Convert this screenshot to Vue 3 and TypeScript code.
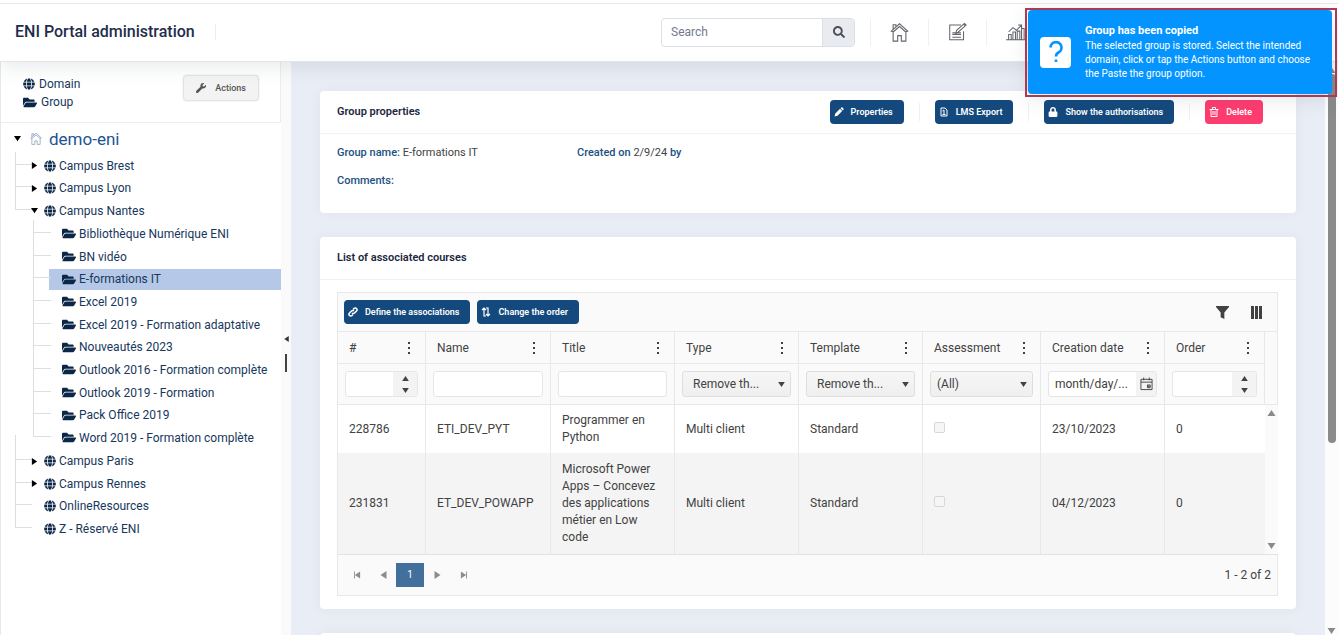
<script setup lang="ts">
import { h, ref } from 'vue'

interface Glyph {
  box: string
  fill?: string
  stroke?: string
  width?: number
}

const glyphs: Record<string, Glyph> = {
  globe: {
    box: '0 0 496 512',
    fill: 'M336.5 160C322 70.7 287.8 8 248 8s-74 62.7-88.5 152h177zM152 256c0 22.2 1.2 43.5 3.3 64h185.3c2.1-20.5 3.3-41.8 3.3-64s-1.2-43.5-3.3-64H155.3c-2.1 20.5-3.3 41.8-3.3 64zm324.7-96c-28.6-67.9-86.5-120.4-158-141.6 24.4 33.8 41.2 84.7 50 141.6h108zM177.2 18.4C105.8 39.6 47.8 92.1 19.3 160h108c8.7-56.9 25.5-107.8 49.9-141.6zM487.4 192H372.7c2.1 21 3.3 42.5 3.3 64s-1.2 43-3.3 64h114.6c5.5-20.5 8.6-41.8 8.6-64s-3.1-43.5-8.5-64zM120 256c0-21.5 1.2-43 3.3-64H8.6C3.2 212.5 0 233.8 0 256s3.2 43.5 8.6 64h114.6c-2-21-3.2-42.5-3.2-64zm39.5 96c14.5 89.3 48.7 152 88.5 152s74-62.7 88.5-152h-177zm159.3 141.6c71.4-21.2 129.4-73.7 158-141.6h-108c-8.8 56.9-25.6 107.8-50 141.6zM19.3 352c28.6 67.9 86.5 120.4 158 141.6-24.4-33.8-41.2-84.7-50-141.6h-108z',
  },
  folder: {
    box: '0 0 576 512',
    fill: 'M572.694 292.093L500.27 416.248A63.997 63.997 0 0 1 444.989 448H45.025c-18.523 0-30.064-20.093-20.731-36.093l72.424-124.155A64 64 0 0 1 152 256h399.964c18.523 0 30.064 20.093 20.73 36.093zM152 224h328v-48c0-26.51-21.49-48-48-48H272l-64-64H48C21.49 64 0 85.49 0 112v278.046l69.077-118.418C86.214 242.25 117.989 224 152 224z',
  },
  search: {
    box: '0 0 512 512',
    fill: 'M505 442.7L405.3 343c-4.5-4.5-10.6-7-17-7H372c27.6-35.3 44-79.7 44-128C416 93.1 322.9 0 208 0S0 93.1 0 208s93.1 208 208 208c48.3 0 92.7-16.4 128-44v16.3c0 6.4 2.5 12.5 7 17l99.7 99.7c9.4 9.4 24.6 9.4 33.9 0l28.3-28.3c9.4-9.4 9.4-24.6.1-34zM208 336c-70.7 0-128-57.2-128-128 0-70.7 57.2-128 128-128 70.7 0 128 57.2 128 128 0 70.7-57.2 128-128 128z',
  },
  lock: {
    box: '0 0 448 512',
    fill: 'M400 224h-24v-72C376 68.2 307.8 0 224 0S72 68.2 72 152v72H48c-26.5 0-48 21.5-48 48v192c0 26.5 21.5 48 48 48h352c26.5 0 48-21.5 48-48V272c0-26.5-21.5-48-48-48zm-104 0H152v-72c0-39.7 32.3-72 72-72s72 32.3 72 72v72z',
  },
  wrench: {
    box: '0 0 512 512',
    fill: 'M507.73 109.1c-2.24-9.03-13.54-12.09-20.12-5.51l-74.36 74.36-67.88-11.31-11.31-67.88 74.36-74.36c6.62-6.62 3.43-17.9-5.66-20.16-47.38-11.74-99.55.91-136.58 37.93-39.64 39.64-50.55 97.1-34.05 147.2L18.74 402.76c-24.99 24.99-24.99 65.51 0 90.5 24.99 24.99 65.51 24.99 90.5 0l213.21-213.21c50.12 16.71 107.47 5.68 147.37-34.22 37.07-37.07 49.7-89.32 37.91-136.73z',
  },
  pencil: { box: '0 0 20 20', fill: 'M1 19l1.6-6L12 3.600l4.400 4.400L7 17.400zM13.200 2.400l1.200-1.200a1.800 1.800 0 0 1 2.500 0l1.900 1.900a1.800 1.800 0 0 1 0 2.500l-1.200 1.200z' },
  export: { box: '0 0 20 20', stroke: 'M4 2h8l4 4v12H4zM10 6v8M7 8l3-2M7 15h6', width: 2 },
  trash: { box: '0 0 20 20', stroke: 'M1 5h18M7 4V1h6v3M4 5v14h12V5M8 8v8M12 8v8', width: 2 },
  link: { box: '0 0 20 20', stroke: 'M8 12a3.500 3.500 0 0 0 5 0l4-4a3.500 3.500 0 0 0-5-5l-2 2M12 8a3.500 3.500 0 0 0-5 0l-4 4a3.500 3.500 0 0 0 5 5l2-2', width: 3 },
  order: { box: '0 0 20 20', stroke: 'M6 19V3M2 6l4-4 4 4M6 18h4M14 1v16M10 14l4 4 4-4M14 2h-4', width: 2.4 },
  home: { box: '0 0 20 22', stroke: 'M1 10L10 2l9 8-2 1-7-6-7 6zM3 11v10h5v-6h4v6h5V11M3 8V3h3v3', width: 1.2 },
  note: { box: '0 0 22 22', stroke: 'M15 3H2v17h16V10M9 13l1-4 9-8 2 2-9 8zM18 2l2 2M5 12h10M5 14h10M5 17h10', width: 1.2 },
  chart: { box: '0 0 22 22', stroke: 'M0 20h22M3 20v-6h3v6M8 20v-9h3v9M13 20V10h3v10M18 20V7h3v13M3 11l5-5 4 3 6-6M14 3h4v4', width: 1.2 },
  filter: { box: '0 0 14 14', fill: 'M0 0h14v1L9 7v7l-4-2V7L0 1z' },
  columns: { box: '0 0 13 13', fill: 'M1 0h3v13H1zM5 0h3v13H5zM9 0h3v13H9z' },
  dots: { box: '0 0 4 14', fill: 'M1 1h2v2H1zM1 6h2v2H1zM1 11h2v2H1z' },
  calendar: { box: '0 0 14 14', stroke: 'M1 2h12v11H1zM1 5h12M4 0v3M10 0v3M8 8h3v3H8zM9 9h1v1H9z', width: 1 },
  up: { box: '0 0 8 6', fill: 'M4 0l4 6H0z' },
  down: { box: '0 0 8 6', fill: 'M0 0h8L4 6z' },
  right: { box: '0 0 6 8', fill: 'M0 0l6 4-6 4z' },
  left: { box: '0 0 6 8', fill: 'M6 0v8L0 4z' },
  first: { box: '0 0 8 8', fill: 'M0 0h1v8H0zM7 0v8L1 4z' },
  last: { box: '0 0 8 8', fill: 'M7 0h1v8H7zM1 0l6 4-6 4z' },
  question: { box: '0 0 16 22', stroke: 'M2.500 6.500a5.500 5.500 0 1 1 8 5C8.500 12.500 8 13.500 8 15.500M8 18.500v2.500', width: 2.6 },
}

const Icon = (props: { name: string }) => {
  const g = glyphs[props.name]
  return h('svg', { viewBox: g.box, 'aria-hidden': 'true' }, [
    g.fill
      ? h('path', { d: g.fill, fill: 'currentColor' })
      : h('path', { d: g.stroke, fill: 'none', stroke: 'currentColor', 'stroke-width': g.width }),
  ])
}
Icon.props = ['name']

interface TreeNode {
  label: string
  state?: 'open' | 'closed'
  groups?: string[]
}

const campuses: TreeNode[] = [
  { label: 'Campus Brest', state: 'closed' },
  { label: 'Campus Lyon', state: 'closed' },
  {
    label: 'Campus Nantes',
    state: 'open',
    groups: [
      'Bibliothèque Numérique ENI',
      'BN vidéo',
      'E-formations IT',
      'Excel 2019',
      'Excel 2019 - Formation adaptative',
      'Nouveautés 2023',
      'Outlook 2016 - Formation complète',
      'Outlook 2019 - Formation',
      'Pack Office 2019',
      'Word 2019 - Formation complète',
    ],
  },
  { label: 'Campus Paris', state: 'closed' },
  { label: 'Campus Rennes', state: 'closed' },
  { label: 'OnlineResources' },
  { label: 'Z - Réservé ENI' },
]

const selected = ref('E-formations IT')

const navItems = [
  { icon: 'home', label: 'Home' },
  { icon: 'note', label: 'Registrations' },
  { icon: 'chart', label: 'Statistics' },
]

const groupActions = [
  { icon: 'pencil', label: 'Properties' },
  { icon: 'export', label: 'LMS Export' },
  { icon: 'lock', label: 'Show the authorisations' },
  { icon: 'trash', label: 'Delete', danger: true },
]

const columns = [
  { key: 'id', label: '#', filter: 'number' },
  { key: 'name', label: 'Name', filter: 'text' },
  { key: 'title', label: 'Title', filter: 'text' },
  { key: 'type', label: 'Type', filter: 'select', option: 'Remove th...' },
  { key: 'template', label: 'Template', filter: 'select', option: 'Remove th...' },
  { key: 'assessment', label: 'Assessment', filter: 'select', option: '(All)' },
  { key: 'date', label: 'Creation date', filter: 'date' },
  { key: 'order', label: 'Order', filter: 'number' },
]

const courses = [
  { id: 228786, name: 'ETI_DEV_PYT', title: 'Programmer en Python', type: 'Multi client', template: 'Standard', date: '23/10/2023', order: 0 },
  { id: 231831, name: 'ET_DEV_POWAPP', title: 'Microsoft Power Apps – Concevez des applications métier en Low code', type: 'Multi client', template: 'Standard', date: '04/12/2023', order: 0 },
]
</script>

<template>
  <div class="page">
    <header class="topbar">
      <h1 class="brand">ENI Portal administration</h1>
      <form class="search" role="search" @submit.prevent>
        <input type="text" placeholder="Search" aria-label="Search" />
        <button type="submit" aria-label="Run search"><Icon name="search" class="ic-search" /></button>
      </form>
      <nav class="nav">
        <a v-for="n in navItems" :key="n.icon" href="#" :aria-label="n.label"><Icon :name="n.icon" class="ic-nav" /></a>
      </nav>
    </header>

    <div class="body">
      <aside class="sidebar">
        <div class="legend">
          <ul>
            <li><Icon name="globe" class="ic-globe" />Domain</li>
            <li><Icon name="folder" class="ic-folder" />Group</li>
          </ul>
          <button type="button" class="actions"><Icon name="wrench" class="ic-btn" />Actions</button>
        </div>
        <div class="root">
          <button type="button" class="toggle" aria-label="Collapse demo-eni"><Icon name="down" class="ic-toggle" /></button>
          <Icon name="home" class="ic-home" />
          <a href="#">demo-eni</a>
        </div>
        <ul class="tree">
          <li v-for="node in campuses" :key="node.label">
            <div class="node">
              <button v-if="node.state" type="button" class="toggle" :aria-label="'Toggle ' + node.label">
                <Icon :name="node.state === 'open' ? 'down' : 'right'" class="ic-toggle" />
              </button>
              <span v-else class="toggle"></span>
              <a href="#"><Icon name="globe" class="ic-globe" />{{ node.label }}</a>
            </div>
            <ul v-if="node.groups" class="groups">
              <li v-for="g in node.groups" :key="g">
                <a href="#" :class="{ active: g === selected }" @click.prevent="selected = g"><Icon name="folder" class="ic-folder" />{{ g }}</a>
              </li>
            </ul>
          </li>
        </ul>
      </aside>

      <div class="splitter">
        <button type="button" aria-label="Collapse panel"><Icon name="left" class="ic-left" /></button>
        <span class="grip"></span>
      </div>

      <main class="content">
        <section class="card">
          <div class="card-head">
            <h2>Group properties</h2>
            <div class="head-actions">
              <div v-for="a in groupActions" :key="a.label" class="head-action">
                <button type="button" class="btn" :class="{ danger: a.danger }"><Icon :name="a.icon" class="ic-btn" />{{ a.label }}</button>
              </div>
            </div>
          </div>
          <div class="props">
            <p><b>Group name:</b> E-formations IT</p>
            <p><b>Created on</b> 2/9/24 <b>by</b></p>
            <p><b>Comments:</b></p>
          </div>
        </section>

        <section class="card">
          <div class="card-head"><h2>List of associated courses</h2></div>
          <div class="grid-wrap">
            <div class="grid">
              <div class="toolbar">
                <button type="button" class="btn"><Icon name="link" class="ic-btn" />Define the associations</button>
                <button type="button" class="btn"><Icon name="order" class="ic-btn" />Change the order</button>
                <div class="tools">
                  <button type="button" class="plain" aria-label="Filter"><Icon name="filter" class="ic-tool" /></button>
                  <button type="button" class="plain" aria-label="Columns"><Icon name="columns" class="ic-tool" /></button>
                </div>
              </div>
              <table>
                <colgroup>
                  <col v-for="c in columns" :key="c.key" :class="'c-' + c.key" />
                  <col class="c-gutter" />
                </colgroup>
                <thead>
                  <tr class="titles">
                    <th v-for="c in columns" :key="c.key" scope="col">
                      <div class="th">
                        <span>{{ c.label }}</span>
                        <button type="button" class="plain" :aria-label="c.label + ' column menu'"><Icon name="dots" class="ic-dots" /></button>
                      </div>
                    </th>
                    <td rowspan="2"></td>
                  </tr>
                  <tr class="filters">
                    <td v-for="c in columns" :key="c.key">
                      <div v-if="c.filter === 'number'" class="field number">
                        <input type="text" inputmode="numeric" :aria-label="'Filter ' + c.label" />
                        <span class="spin">
                          <button type="button" aria-label="Increase"><Icon name="up" class="ic-arrow" /></button>
                          <button type="button" aria-label="Decrease"><Icon name="down" class="ic-arrow" /></button>
                        </span>
                      </div>
                      <div v-else-if="c.filter === 'text'" class="field">
                        <input type="text" :aria-label="'Filter ' + c.label" />
                      </div>
                      <div v-else-if="c.filter === 'select'" class="field drop">
                        <select :aria-label="'Filter ' + c.label"><option>{{ c.option }}</option></select>
                        <Icon name="down" class="ic-arrow" />
                      </div>
                      <div v-else class="field date">
                        <input type="text" placeholder="month/day/..." :aria-label="'Filter ' + c.label" />
                        <button type="button" aria-label="Open calendar"><Icon name="calendar" class="ic-cal" /></button>
                      </div>
                    </td>
                  </tr>
                </thead>
                <tbody>
                  <tr v-for="(r, i) in courses" :key="r.id">
                    <td>{{ r.id }}</td>
                    <td>{{ r.name }}</td>
                    <td>{{ r.title }}</td>
                    <td>{{ r.type }}</td>
                    <td>{{ r.template }}</td>
                    <td><input type="checkbox" disabled :aria-label="'Assessment ' + r.name" /></td>
                    <td>{{ r.date }}</td>
                    <td>{{ r.order }}</td>
                    <td v-if="i === 0" class="gutter" :rowspan="courses.length">
                      <div class="gutter-bar"><Icon name="up" class="ic-bar" /><Icon name="down" class="ic-bar" /></div>
                    </td>
                  </tr>
                </tbody>
              </table>
              <div class="pager">
                <button type="button" class="plain" aria-label="First page"><Icon name="first" class="ic-page" /></button>
                <button type="button" class="plain" aria-label="Previous page"><Icon name="left" class="ic-page" /></button>
                <button type="button" class="current">1</button>
                <button type="button" class="plain" aria-label="Next page"><Icon name="right" class="ic-page" /></button>
                <button type="button" class="plain" aria-label="Last page"><Icon name="last" class="ic-page" /></button>
                <span class="count">1 - 2 of 2</span>
              </div>
            </div>
          </div>
        </section>

        <section class="card next"></section>
      </main>

      <div class="scrollbar">
        <Icon name="up" class="ic-bar" />
        <span class="thumb"></span>
        <Icon name="down" class="ic-bar" />
      </div>
    </div>

    <div class="toast-frame">
      <div class="toast" role="status">
        <span class="toast-icon"><Icon name="question" class="ic-question" /></span>
        <div>
          <strong>Group has been copied</strong>
          <p>The selected group is stored. Select the intended domain, click or tap the Actions button and choose the Paste the group option.</p>
        </div>
      </div>
    </div>
  </div>
</template>

<style>
body {
  margin: 0;
  overflow: hidden;
}
</style>

<style scoped>
.page,
.page * {
  box-sizing: border-box;
}
.page {
  position: relative;
  display: flex;
  flex-direction: column;
  height: 100vh;
  overflow: hidden;
  font: 12px/18px Roboto, "Liberation Sans", sans-serif;
  color: #424242;
  background: #fff;
}
h1, h2, p, ul {
  margin: 0;
  padding: 0;
}
ul {
  list-style: none;
}
a {
  color: inherit;
  text-decoration: none;
}
button, input, select {
  font: inherit;
  color: inherit;
  margin: 0;
  padding: 0;
  border: 0;
  background: none;
  min-width: 0;
}
svg {
  display: block;
  flex: none;
}

.topbar {
  position: relative;
  z-index: 2;
  flex: none;
  display: flex;
  align-items: center;
  height: 62px;
  padding: 3px 294px 0 15px;
  background: linear-gradient(#fff 3px, #e9eaec 3px, #e9eaec 4px, #fff 4px);
  border-bottom: 1px solid #e2e5e9;
  box-shadow: 0 4px 20px rgba(60, 75, 95, 0.13);
}
.brand {
  font-size: 16px;
  font-weight: 500;
  line-height: 16px;
  color: #1f2d4d;
  padding-right: 20px;
  border-right: 1px solid #eceef3;
}
.search {
  display: flex;
  width: 194px;
  height: 29px;
  margin-left: auto;
  border: 1px solid #dcdfe6;
  border-radius: 4px;
  overflow: hidden;
}
.search input {
  flex: 1;
  padding: 0 9px;
}
.search input::placeholder {
  color: #74788d;
  opacity: 1;
}
.search button {
  display: grid;
  place-items: center;
  width: 32px;
  background: #e9ebf0;
  border-left: 1px solid #dcdfe6;
  color: #495057;
}
.nav {
  display: flex;
  margin-left: 15px;
}
.nav a {
  display: grid;
  place-items: center;
  width: 58px;
  height: 27px;
  border-left: 1px solid #eef0f5;
  color: #63666c;
}
.ic-search { width: 12px; height: 12px; }
.ic-nav { width: 19px; height: 20px; }

.body {
  flex: 1;
  min-height: 0;
  display: flex;
}
.sidebar {
  flex: none;
  width: 281px;
  border-left: 1px solid #e6e8ec;
  color: #17375c;
  overflow: hidden;
}
.legend {
  display: flex;
  justify-content: space-between;
  align-items: flex-start;
  height: 61px;
  padding: 13px 21px 0 22px;
  border: 1px solid #ebedf0;
  border-width: 0 1px 1px 0;
}
.legend li {
  display: flex;
  align-items: center;
  gap: 4px;
}
.actions {
  display: flex;
  align-items: center;
  gap: 9px;
  height: 26px;
  padding: 0 12px;
  border: 1px solid #e4e4e4;
  border-radius: 4px;
  background: #f3f3f3;
  box-shadow: 0 0 2px #dcdcdc;
  font-size: 9px;
  font-weight: 500;
  color: #555;
}
.ic-globe { width: 12px; height: 12px; color: #0b2747; }
.ic-folder { width: 14px; height: 13px; color: #0b2747; }
.toggle {
  display: grid;
  place-items: center;
  flex: none;
  width: 8px;
  height: 12px;
  color: #000;
}
.ic-toggle { width: 7px; height: 7px; }
.root {
  display: flex;
  align-items: center;
  height: 31px;
  padding-left: 12px;
  font-size: 17px;
  color: #205493;
}
.ic-home {
  width: 12px;
  height: 13px;
  margin: 0 7px 0 9px;
  color: #7c99b8;
}
.node {
  position: relative;
  display: flex;
  align-items: center;
  gap: 6px;
  height: 23px;
  padding-left: 29px;
}
li:nth-child(even) > .node {
  height: 22px;
}
.node a,
.groups a {
  display: flex;
  align-items: center;
  gap: 3px;
}
.node::before,
.groups li::before {
  content: "";
  position: absolute;
  left: 14px;
  bottom: 12px;
  width: 16px;
  height: 24px;
  border: 1px solid #dcdee1;
  border-width: 0 0 1px 1px;
}
.node .toggle {
  position: relative;
}
li:first-child > .node::before {
  height: 12px;
}
.groups {
  display: grid;
  grid-auto-rows: 23px 23px 22px;
  padding-bottom: 1px;
}
.groups li {
  position: relative;
  display: flex;
  align-items: center;
  padding-left: 48px;
}
.groups li::before {
  left: 32px;
  width: 17px;
}
.groups li:first-child::before {
  height: 12px;
}
.groups a {
  flex: 1;
  height: 21px;
  padding-left: 13px;
}
.groups a.active {
  background: #b5c8e7;
}

.splitter {
  flex: none;
  display: flex;
  flex-direction: column;
  align-items: center;
  justify-content: center;
  gap: 12px;
  width: 10px;
  padding-top: 11px;
  background: #fafafa;
  color: #333;
}
.ic-left { width: 5px; height: 6px; }
.grip {
  width: 2px;
  height: 18px;
  background: #424242;
}

.content {
  flex: 1;
  min-width: 0;
  display: flex;
  flex-direction: column;
  gap: 24px;
  padding: 29px 29px 0 29px;
  background: #e9edf5;
  overflow: hidden;
}
.card {
  flex: none;
  background: #fff;
  border-radius: 4px;
  box-shadow: 0 0 13px rgba(82, 63, 105, 0.05);
}
.card-head {
  display: flex;
  align-items: center;
  justify-content: space-between;
  height: 43px;
  padding: 0 33px 0 17px;
  border-bottom: 1px solid #f0f2f5;
}
h2 {
  font-size: 11px;
  line-height: 16px;
  font-weight: 600;
  color: #1c2840;
}
.head-actions {
  display: flex;
}
.head-action + .head-action {
  position: relative;
  margin-left: 31px;
}
.head-action + .head-action::before {
  content: "";
  position: absolute;
  left: -16px;
  top: 3px;
  height: 18px;
  border-left: 1px solid #eef0f4;
}
.btn {
  display: flex;
  align-items: center;
  gap: 7px;
  height: 24px;
  padding: 0 11px 0 4px;
  border-radius: 4px;
  background: #14497d;
  color: #fff;
  font-size: 9px;
  font-weight: 600;
  white-space: nowrap;
}
.btn.danger {
  background: #ff3c6f;
}
.ic-btn { width: 10px; height: 10px; }
.props {
  display: grid;
  grid-template-columns: 1fr 3fr;
  gap: 12px 6px;
  padding: 11px 17px 24px;
  font-size: 11px;
  line-height: 16px;
}
.props b {
  font-weight: 500;
  color: #205081;
}
.grid-wrap {
  padding: 12px 18px 13px 17px;
}
.grid {
  border: 1px solid #e8e8e8;
  background: #fafafa;
}
.toolbar {
  display: flex;
  align-items: center;
  gap: 7px;
  height: 38px;
  padding: 0 14px 0 6px;
}
.tools {
  display: flex;
  gap: 21px;
  margin-left: auto;
}
.plain {
  display: grid;
  place-items: center;
}
.ic-tool { width: 13px; height: 13px; }
table {
  width: 100%;
  table-layout: fixed;
  border-collapse: separate;
  border-spacing: 0;
}
.c-id { width: 88px; }
.c-name { width: 125px; }
.c-title, .c-type, .c-template, .c-date { width: 124px; }
.c-assessment { width: 118px; }
.c-order { width: 100px; }
.c-gutter { width: 13px; }
th, td {
  padding: 0;
  text-align: left;
  font-weight: 400;
  border-right: 1px solid #e8e8e8;
}
tr > td:last-child:not([class]):empty {
  border-right: 0;
}
thead th,
thead td {
  border-top: 1px solid #e8e8e8;
}
.th {
  display: flex;
  justify-content: space-between;
  align-items: center;
  height: 31px;
  padding: 0 14px 0 11px;
  white-space: nowrap;
}
.ic-dots { width: 4px; height: 14px; }
.filters > td {
  padding: 7px;
}
.field {
  display: flex;
  position: relative;
  height: 26px;
  border: 1px solid #e6e6e6;
  border-radius: 3px;
  background: #fff;
  overflow: hidden;
}
.field input,
.field select {
  flex: 1;
  width: 100%;
}
.field input {
  padding: 0 6px;
}
.field input::placeholder {
  color: #424242;
  opacity: 1;
}
.spin {
  flex: none;
  display: grid;
  grid-template-rows: 1fr 1fr;
  width: 24px;
  background: #f3f3f3;
}
.spin button {
  display: grid;
  place-items: center;
}
.drop {
  align-items: center;
  background: linear-gradient(#f6f6f6, #efefef);
  border-color: #dedede;
}
.drop select {
  appearance: none;
  height: 24px;
  padding: 0 6px 0 10px;
}
.drop .ic-arrow {
  margin-right: 5px;
}
.filters td:nth-child(6) select {
  padding-left: 6px;
}
.date button {
  display: grid;
  place-items: center;
  width: 20px;
  background: #f3f3f3;
}
.ic-arrow { width: 7px; height: 5px; }
.ic-cal { width: 13px; height: 14px; }
tbody td {
  padding: 7px 11px;
  line-height: 17px;
  background: #fff;
}
tbody tr:first-child td {
  border-top: 1px solid #e8e8e8;
}
tbody tr:nth-child(2) td {
  padding: 8px 11px;
  background: #f4f4f4;
}
tbody td:nth-child(8) {
  border-right: 0;
}
tbody input[type="checkbox"] {
  appearance: none;
  display: block;
  width: 11px;
  height: 11px;
  margin-bottom: 4px;
  border: 1px solid #d8d8d8;
  border-radius: 2px;
  background: #f6f6f6;
}
tbody tr:first-child td.gutter {
  padding: 0;
  border-right: 0;
  background: #fafafa;
}
.gutter-bar {
  display: flex;
  flex-direction: column;
  justify-content: space-between;
  align-items: center;
  height: 149px;
  padding: 5px 0;
  color: #8a8a8a;
}
.ic-bar { width: 9px; height: 6px; }
.pager {
  display: flex;
  align-items: center;
  height: 41px;
  padding: 0 6px;
  border-top: 1px solid #e2e2e2;
}
.pager .plain {
  width: 26px;
  height: 24px;
  color: #8c8c8c;
}
.current {
  width: 28px;
  height: 24px;
  background: #426f9c;
  color: #fff;
  font-size: 10px;
}
.ic-page { width: 7px; height: 8px; }
.count {
  margin-left: auto;
}
.next {
  height: 60px;
}

.scrollbar {
  flex: none;
  display: flex;
  flex-direction: column;
  align-items: center;
  width: 13px;
  padding: 5px 0 1px;
  background: #fcfcfc;
  color: #8a8a8a;
}
.thumb {
  width: 8px;
  height: 65%;
  margin: 1px 0 auto;
  border-radius: 4px;
  background: #8a8a8a;
}

.toast-frame {
  position: absolute;
  z-index: 3;
  top: 8px;
  right: 1px;
  width: 312px;
  padding: 0 3px 1px 1px;
  border: 2px solid #b23a54;
}
.toast {
  display: flex;
  align-items: center;
  gap: 14px;
  height: 84px;
  padding: 0 8px 0 12px;
  border-radius: 4px;
  background: #0394ff;
  color: #fff;
  font-size: 10px;
  line-height: 14px;
  box-shadow: 0 4px 20px rgba(60, 75, 95, 0.15);
}
.toast strong {
  display: block;
  font-size: 11px;
  line-height: 16px;
  font-weight: 700;
}
.toast-icon {
  flex: none;
  display: grid;
  place-items: center;
  width: 31px;
  height: 31px;
  border-radius: 4px;
  background: #fff;
  color: #0394ff;
}
.ic-question { width: 16px; height: 22px; }
</style>
